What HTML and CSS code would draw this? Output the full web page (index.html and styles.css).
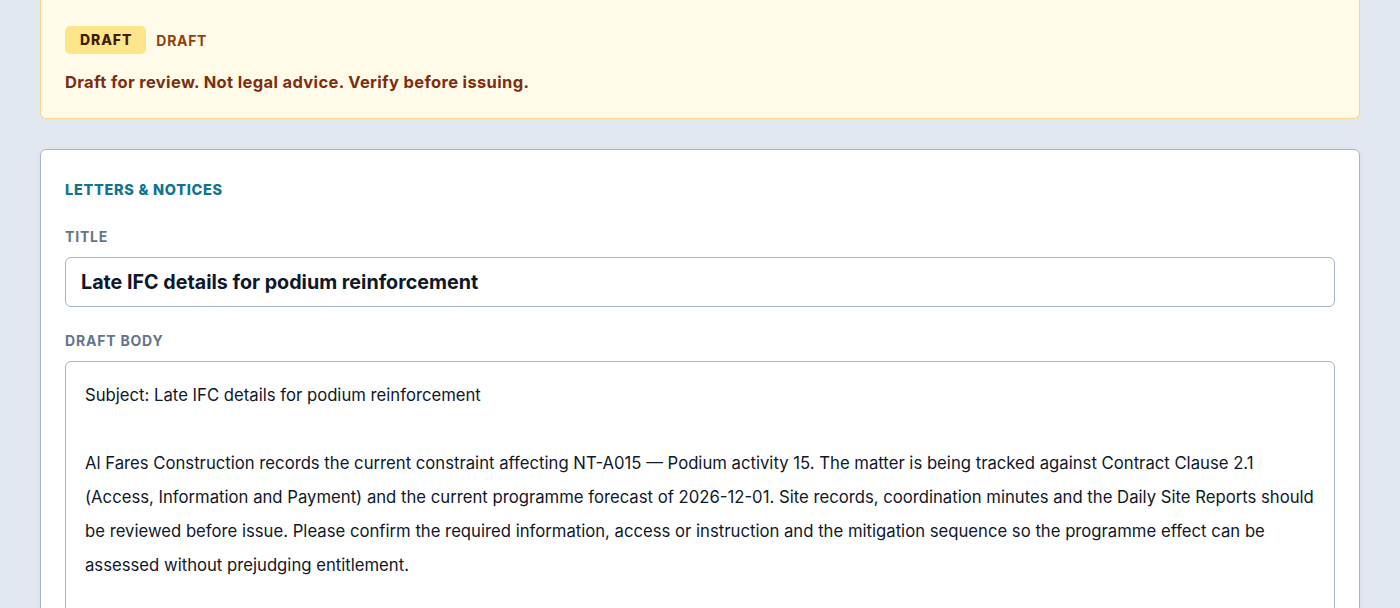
FILE: index.html
```html
<!DOCTYPE html>
<html lang="en">
<head>
<meta charset="utf-8">
<title>Letters &amp; Notices</title>
<link rel="stylesheet" href="styles.css">
</head>
<body>
<div class="page">
  <section class="banner">
    <div class="banner-row">
      <span class="badge">DRAFT</span>
      <span class="badge-label">DRAFT</span>
    </div>
    <p class="banner-msg">Draft for review. Not legal advice. Verify before issuing.</p>
  </section>
  <section class="card">
    <h2 class="eyebrow">LETTERS &amp; NOTICES</h2>
    <label class="field-label">TITLE</label>
    <div class="input">Late IFC details for podium reinforcement</div>
    <label class="field-label">DRAFT BODY</label>
    <div class="textarea">Subject: Late IFC details for podium reinforcement

Al Fares Construction records the current constraint affecting NT-A015 — Podium activity 15. The matter is being tracked against Contract Clause 2.1 (Access, Information and Payment) and the current programme forecast of 2026-12-01. Site records, coordination minutes and the Daily Site Reports should be reviewed before issue. Please confirm the required information, access or instruction and the mitigation sequence so the programme effect can be assessed without prejudging entitlement.

Regards,
Al Fares Construction</div>
  </section>
</div>
</body>
</html>
```
FILE: styles.css
```css
html, body {
  margin: 0;
  padding: 0;
  background: #e2e8f0;
  font-family: Inter, "Noto Sans", sans-serif;
  color: #0f172a;
}
.page {
  padding: 0 40px;
  display: flex;
  flex-direction: column;
  gap: 30px;
}
.banner {
  background: #fffbe8;
  border: 1px solid #fcd391;
  border-top: none;
  border-radius: 0 0 6px 6px;
  padding: 26px 24px 26px;
}
.banner-row {
  display: flex;
  align-items: center;
  gap: 10px;
}
.badge {
  background: #fde68a;
  color: #451a03;
  font-weight: 800;
  font-size: 14px;
  letter-spacing: 0.9px;
  height: 28px;
  line-height: 28px;
  padding: 0 14px 0 15px;
  border-radius: 5px;
}
.badge-label {
  color: #92400e;
  font-weight: 700;
  font-size: 14px;
  letter-spacing: 0.7px;
}
.banner-msg {
  margin: 18px 0 0;
  color: #7c2d12;
  font-weight: 700;
  font-size: 16.5px;
  letter-spacing: 0.35px;
  line-height: 20px;
}
.card {
  background: #fff;
  border: 1px solid #a8b5c7;
  border-radius: 6px;
  padding: 30px 24px 24px;
  box-shadow: 0 2px 6px rgba(15, 23, 42, 0.06);
}
.eyebrow {
  margin: 0 0 27px;
  color: #0e7490;
  font-size: 14.5px;
  font-weight: 800;
  letter-spacing: 0.7px;
  line-height: 20px;
}
.field-label {
  display: block;
  color: #64748b;
  font-size: 14px;
  font-weight: 700;
  letter-spacing: 0.8px;
  line-height: 20px;
  margin-bottom: 10px;
}
.input {
  border: 1px solid #a8b5c7;
  border-radius: 6px;
  height: 48px;
  line-height: 48px;
  padding: 0 15px;
  font-size: 19.7px;
  font-weight: 700;
  color: #0f172a;
  margin-bottom: 24px;
}
.textarea {
  border: 1px solid #a8b5c7;
  border-radius: 6px;
  padding: 16px 19px 15px;
  font-size: 16.7px;
  line-height: 34px;
  white-space: pre-wrap;
  color: #0f172a;
  min-height: 300px;
}
```
